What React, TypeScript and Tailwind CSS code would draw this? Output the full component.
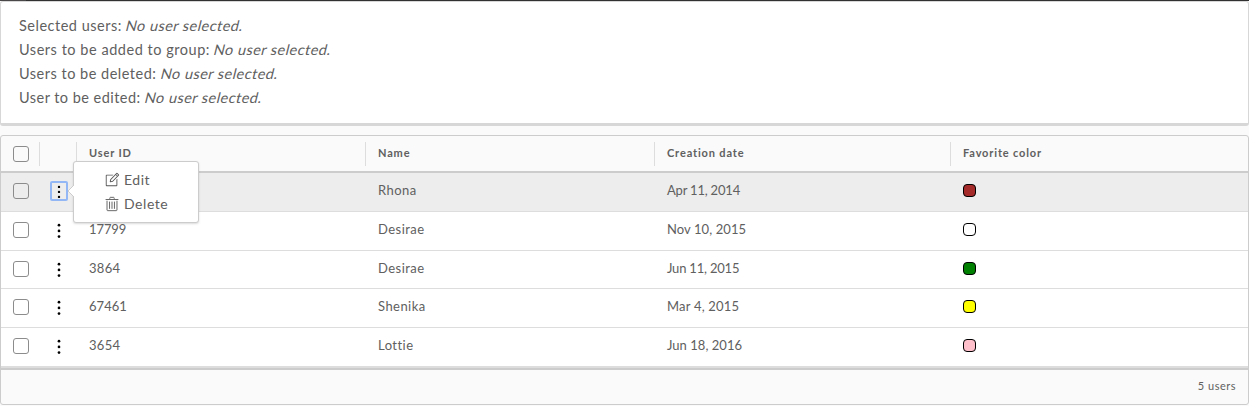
import React from 'react';

const summary = [
  { label: 'Selected users:', tracking: 'tracking-[0.5px]' },
  { label: 'Users to be added to group:', tracking: 'tracking-[0.53px]' },
  { label: 'Users to be deleted:', tracking: 'tracking-[0.5px]' },
  { label: 'User to be edited:', tracking: 'tracking-[0.46px]' },
];

const users = [
  { id: '', name: 'Rhona', date: 'Apr 11, 2014', dateCls: 'tracking-[-0.2px]', idCls: '', color: 'bg-[#a52a2a]', row: 'h-[39px] bg-[#ededed] border-b' },
  { id: '17799', name: 'Desirae', date: 'Nov 10, 2015', dateCls: 'tracking-[0.08px]', idCls: 'tracking-[-0.1px]', color: 'bg-white', row: 'h-[39px] border-b bg-white' },
  { id: '3864', name: 'Desirae', date: 'Jun 11, 2015', dateCls: 'tracking-[-0.2px]', idCls: 'tracking-[0.3px]', color: 'bg-[#008000]', row: 'h-[38px] border-b bg-white' },
  { id: '67461', name: 'Shenika', date: 'Mar 4, 2015', dateCls: 'tracking-[0.2px]', idCls: 'tracking-[0.05px]', color: 'bg-[#ffff00]', row: 'h-[39px] border-b bg-white' },
  { id: '3654', name: 'Lottie', date: 'Jun 18, 2016', dateCls: 'tracking-[0.03px]', idCls: 'tracking-[0.3px]', color: 'bg-[#ffc0cb]', row: 'h-10 border-b-2 bg-white' },
];

const columns = 'grid grid-cols-[38px_37px_289px_289px_296px_1fr]';

function Checkbox() {
  return <span className="block size-4 rounded-[3px] border border-[#8c8c8c]" />;
}

function Dots() {
  return (
    <svg className="block" width="16" height="16" viewBox="0 0 16 16" fill="#000">
      <circle cx="8" cy="2.2" r="1.35" />
      <circle cx="8" cy="7.9" r="1.35" />
      <circle cx="8" cy="13.6" r="1.35" />
    </svg>
  );
}

function EditIcon() {
  return (
    <svg width="16" height="16" viewBox="0 0 36 36" fill="#565656">
      <path d="M28 30H6V8h13.22l2-2H6a2 2 0 0 0-2 2v22a2 2 0 0 0 2 2h22a2 2 0 0 0 2-2V15l-2 2Z" />
      <path d="M33.53 5.84 30.16 2.47a1.61 1.61 0 0 0-2.28 0L14.17 16.26l-1.11 4.81A1.61 1.61 0 0 0 14.63 23a1.69 1.69 0 0 0 .37 0l4.85-1.07L33.53 8.12a1.61 1.61 0 0 0 0-2.28ZM18.81 20.08l-3.66.81.85-3.63L26.32 6.87l2.82 2.82ZM30.27 8.56l-2.82-2.82L29 4.16 31.84 7Z" />
    </svg>
  );
}

function TrashIcon() {
  return (
    <svg width="16" height="16" viewBox="0 0 36 36" fill="none" stroke="#565656" strokeWidth="2" strokeLinecap="round" strokeLinejoin="round">
      <path d="M4.500 7.900h27M6.800 11.500v20c0 .9.6 1.500 1.500 1.500h19.400c.9 0 1.500-.6 1.500-1.500v-20" />
      <path d="M12.500 13.500v14.500M18 13.500v14.500M23.500 13.500v14.500M13 5.500v-1C13 3.700 13.700 3 14.500 3h7c.8 0 1.500.7 1.500 1.500v1" />
    </svg>
  );
}

function ActionMenu() {
  return (
    <div className="absolute left-[21px] top-[-22px] z-10 flex h-[62px] w-[126px] flex-col rounded-[3px] border border-[#ccc] bg-white pl-[30px] pt-[6px] text-[14px] leading-6 shadow-[0_1px_2px_rgba(115,115,115,0.25)]">
      <svg className="absolute left-[-6px] top-[23px]" width="6" height="12" viewBox="0 0 6 12">
        <path d="M6 0 0 6l6 6Z" fill="#fff" />
        <path d="M6 0 0 6l6 6" fill="none" stroke="#ccc" />
      </svg>
      <div className="flex h-6 items-center gap-[4px] tracking-[0.5px]">
        <EditIcon />
        <span>Edit</span>
      </div>
      <div className="flex h-6 items-center gap-[4px] tracking-[0.55px]">
        <TrashIcon />
        <span>Delete</span>
      </div>
    </div>
  );
}

function HeaderCell({ text }: { text: string }) {
  return (
    <div className="flex h-6 items-center border-l border-[#ddd] pl-3">
      <span>{text}</span>
    </div>
  );
}

export default function App() {
  return (
    <div className="flex h-[406px] w-full flex-col overflow-hidden bg-[#fafafa] font-['Lato',sans-serif] text-[#606060]">
      <div className="flex h-px shrink-0">
        <div className="w-[26px] bg-[#4b4849]" />
        <div className="grow bg-[#313131]" />
      </div>
      <section className="h-[125px] shrink-0 rounded-[3px] border border-b-[3px] border-[#d7d7d7] bg-white pl-[18px] pt-3 text-[14.5px] leading-6">
        {summary.map((item) => (
          <p key={item.label} className="whitespace-pre">
            <span className={item.tracking}>{item.label} </span>
            <span className="inline-block -skew-x-[14deg] tracking-[0.45px]">No user selected.</span>
          </p>
        ))}
      </section>
      <section className="mt-[9px] flex h-[270px] shrink-0 flex-col rounded-[3px] border border-[#ccc] text-[13px]">
        <div className={`${columns} h-[37px] shrink-0 items-center border-b-2 border-[#ccc] text-[11px] font-bold tracking-[0.85px]`}>
          <div className="pl-3"><Checkbox /></div>
          <div className="h-6 border-l border-[#ddd]" />
          <HeaderCell text="User ID" />
          <HeaderCell text="Name" />
          <HeaderCell text="Creation date" />
          <HeaderCell text="Favorite color" />
        </div>
        {users.map((user, i) => (
          <div key={user.date} className={`${columns} ${user.row} shrink-0 items-start border-[#ddd] leading-5`}>
            <div className="pl-3 pt-2.5"><Checkbox /></div>
            <div className="pl-[11px] pt-2">
              {i === 0 ? (
                <div className="relative flex h-5 w-[18px] justify-center rounded-[2px] border-2 border-[#93b7f5] pt-px">
                  <Dots />
                  <ActionMenu />
                </div>
              ) : (
                <div className="flex w-[18px] justify-center pt-[3px]"><Dots /></div>
              )}
            </div>
            <div className={`pl-[13px] pt-[7px] ${user.idCls}`}>{user.id}</div>
            <div className="pl-[13px] pt-[7px] tracking-[0.45px]">{user.name}</div>
            <div className={`pl-[13px] pt-[7px] ${user.dateCls}`}>{user.date}</div>
            <div className="pl-[13px] pt-[11px]">
              <span className={`block size-[13px] rounded-[4px] border border-black ${user.color}`} />
            </div>
          </div>
        ))}
        <footer className="flex grow items-center justify-end border-t-2 border-[#ccc] pb-0.5 pr-3 text-[11px] tracking-[0.5px]">
          5 users
        </footer>
      </section>
    </div>
  );
}
